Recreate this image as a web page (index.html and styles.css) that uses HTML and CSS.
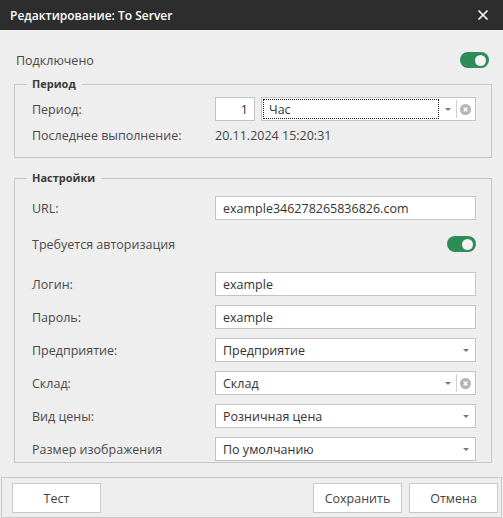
FILE: index.html
```html
<!DOCTYPE html>
<html lang="ru">
<head>
<meta charset="utf-8">
<title>Редактирование: To Server</title>
<link rel="stylesheet" href="styles.css">
</head>
<body>
<div class="dialog">
  <div class="titlebar">
    <span class="title">Редактирование: To Server</span>
    <svg class="close" width="12" height="12" viewBox="0 0 12 12"><path d="M1.5 1.5 L10.5 10.5 M10.5 1.5 L1.5 10.5" stroke="#fff" stroke-width="1.6" fill="none"/></svg>
  </div>
  <div class="content">
    <div class="toprow">
      <span class="label">Подключено</span>
      <span class="toggle"><span class="knob"></span></span>
    </div>

    <fieldset class="group group-period">
      <legend>Период</legend>
      <div class="grid">
        <span class="label">Период:</span>
        <div class="pair">
          <div class="box num">1</div>
          <div class="box select wide">
            <span class="focus">Час</span>
            <span class="arrow"></span>
            <span class="sep"></span>
            <span class="clear"><svg width="11" height="11" viewBox="0 0 11 11"><circle cx="5.5" cy="5.5" r="5.5" fill="#b4b4b4"/><path d="M3.6 3.6 L7.4 7.4 M7.4 3.6 L3.6 7.4" stroke="#fff" stroke-width="1.4"/></svg></span>
          </div>
        </div>
        <span class="label short">Последнее выполнение:</span>
        <span class="value short">20.11.2024 15:20:31</span>
      </div>
    </fieldset>

    <fieldset class="group group-settings">
      <legend>Настройки</legend>
      <div class="grid">
        <span class="label">URL:</span>
        <div class="box">example346278265836826.com</div>
        <div class="authrow">
          <span class="label">Требуется авторизация</span>
          <span class="toggle"><span class="knob"></span></span>
        </div>
        <span class="label">Логин:</span>
        <div class="box">example</div>
        <span class="label">Пароль:</span>
        <div class="box">example</div>
        <span class="label">Предприятие:</span>
        <div class="box select"><span class="text">Предприятие</span><span class="arrow end"></span></div>
        <span class="label">Склад:</span>
        <div class="box select">
          <span class="text">Склад</span>
          <span class="arrow"></span>
          <span class="sep"></span>
          <span class="clear"><svg width="11" height="11" viewBox="0 0 11 11"><circle cx="5.5" cy="5.5" r="5.5" fill="#b4b4b4"/><path d="M3.6 3.6 L7.4 7.4 M7.4 3.6 L3.6 7.4" stroke="#fff" stroke-width="1.4"/></svg></span>
        </div>
        <span class="label">Вид цены:</span>
        <div class="box select"><span class="text">Розничная цена</span><span class="arrow end"></span></div>
        <span class="label">Размер изображения</span>
        <div class="box select"><span class="text">По умолчанию</span><span class="arrow end"></span></div>
      </div>
    </fieldset>
  </div>
  <div class="footer">
    <button class="btn">Тест</button>
    <span class="spacer"></span>
    <button class="btn">Сохранить</button>
    <button class="btn">Отмена</button>
  </div>
</div>
</body>
</html>
```

FILE: styles.css
```css
html, body {
  margin: 0;
  padding: 0;
  background: #eeeeee;
}
body {
  font-family: "Open Sans", "Noto Sans", sans-serif;
  font-size: 12px;
  color: #444;
}
.dialog {
  width: 503px;
  height: 518px;
  display: flex;
  flex-direction: column;
  overflow: hidden;
}
.titlebar {
  height: 30px;
  background: #2d2d2d;
  display: flex;
  align-items: center;
  justify-content: space-between;
  padding: 0 14px 0 10px;
  flex: none;
}
.title {
  color: #fff;
  font-weight: 600;
  font-size: 12px;
}
.close { display: block; }
.content {
  padding: 18px 11px 0 14px;
  flex: 1;
}
.toprow {
  height: 24px;
  display: flex;
  align-items: center;
  justify-content: space-between;
  padding: 0 3px 0 2px;
  margin-bottom: 5px;
}
.label {
  font-size: 12.5px;
  color: #4a4a4a;
}
.toggle {
  width: 29px;
  height: 16px;
  border-radius: 8px;
  background: #2f8c59;
  display: flex;
  align-items: center;
  justify-content: flex-end;
  padding-right: 3px;
  box-sizing: border-box;
}
.knob {
  width: 11px;
  height: 11px;
  border-radius: 50%;
  background: #f4f4f4;
}
.group {
  margin: 0;
  border: 1px solid #c6c6c6;
  padding: 0 15px 0 17px;
  min-width: 0;
}
.group legend {
  font-weight: 700;
  font-size: 11px;
  color: #3a3a3a;
  padding: 0 6px 0 5px;
  margin-left: -5px;
  line-height: 14px;
}
.group-period {
  padding-top: 6px;
  padding-bottom: 11px;
  margin-bottom: 13px;
}
.group-settings {
  padding-top: 11px;
  padding-bottom: 1px;
}
.grid {
  display: grid;
  grid-template-columns: 183px 1fr;
  row-gap: 9px;
  align-items: center;
}
.group-period .grid { row-gap: 5px; }
.short { height: 20px; line-height: 20px; }
.value { font-size: 12.5px; color: #444; }
.pair {
  display: flex;
  gap: 6px;
}
.box {
  height: 24px;
  box-sizing: border-box;
  background: #fff;
  border: 1px solid #c4c4c4;
  padding: 0 7px;
  display: flex;
  align-items: center;
  font-size: 12.5px;
  color: #333;
  position: relative;
}
.num {
  width: 40px;
  justify-content: flex-end;
  padding-right: 6px;
}
.wide { flex: 1; }
.select { padding: 0 0 0 7px; }
.select .text { flex: 1; }
.focus {
  flex: 1;
  align-self: stretch;
  margin: 1px 0 1px -6px;
  padding-left: 5px;
  border: 1px dotted #222;
  display: flex;
  align-items: center;
}
.arrow {
  width: 0;
  height: 0;
  border-left: 3px solid transparent;
  border-right: 3px solid transparent;
  border-top: 3px solid #777;
  margin: 0 5px 0 6px;
}
.arrow.end { margin: 0 6px 0 0; }
.sep {
  width: 1px;
  align-self: stretch;
  background: #cfcfcf;
  margin: 2px 0;
}
.clear {
  display: flex;
  padding: 0 4px 0 3px;
}
.authrow {
  grid-column: 1 / 3;
  height: 30px;
  margin-bottom: 4px;
  display: flex;
  align-items: center;
  justify-content: space-between;
}
.footer {
  flex: none;
  margin: 14px 1px 0 1px;
  height: 41px;
  box-sizing: border-box;
  border: 1px solid #c8c8c8;
  display: flex;
  align-items: flex-start;
  gap: 7px;
  padding: 5px 3px 0 10px;
}
.spacer { flex: 1; }
.btn {
  width: 89px;
  height: 30px;
  background: #fff;
  border: 1px solid #c8c8c8;
  font-family: "Open Sans", "Noto Sans", sans-serif;
  font-size: 12.5px;
  color: #444;
  padding: 0;
}
```
